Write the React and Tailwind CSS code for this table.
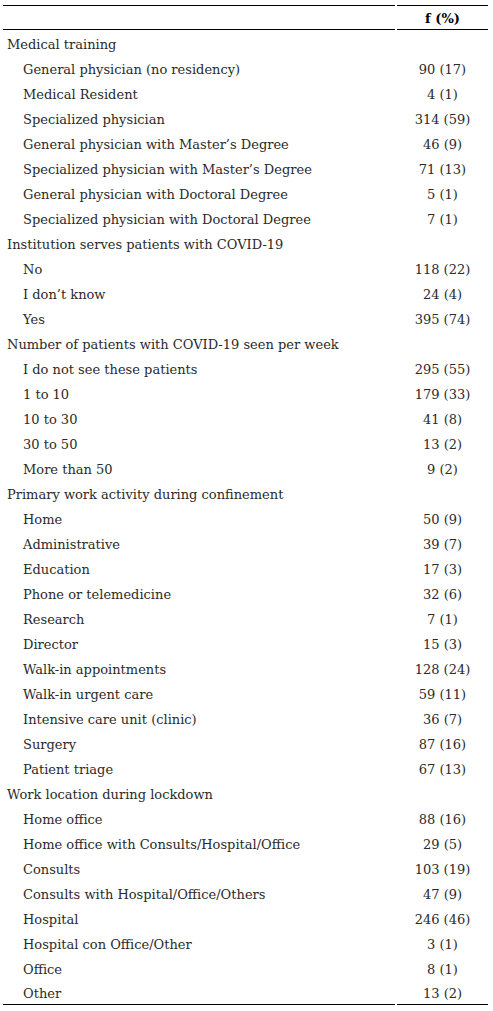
const sections = [
  {
    title: "Medical training",
    rows: [
      ["General physician (no residency)", "90 (17)"],
      ["Medical Resident", "4 (1)"],
      ["Specialized physician", "314 (59)"],
      ["General physician with Master’s Degree", "46 (9)"],
      ["Specialized physician with Master’s Degree", "71 (13)"],
      ["General physician with Doctoral Degree", "5 (1)"],
      ["Specialized physician with Doctoral Degree", "7 (1)"],
    ],
  },
  {
    title: "Institution serves patients with COVID-19",
    rows: [
      ["No", "118 (22)"],
      ["I don’t know", "24 (4)"],
      ["Yes", "395 (74)"],
    ],
  },
  {
    title: "Number of patients with COVID-19 seen per week",
    rows: [
      ["I do not see these patients", "295 (55)"],
      ["1 to 10", "179 (33)"],
      ["10 to 30", "41 (8)"],
      ["30 to 50", "13 (2)"],
      ["More than 50", "9 (2)"],
    ],
  },
  {
    title: "Primary work activity during confinement",
    rows: [
      ["Home", "50 (9)"],
      ["Administrative", "39 (7)"],
      ["Education", "17 (3)"],
      ["Phone or telemedicine", "32 (6)"],
      ["Research", "7 (1)"],
      ["Director", "15 (3)"],
      ["Walk-in appointments", "128 (24)"],
      ["Walk-in urgent care", "59 (11)"],
      ["Intensive care unit (clinic)", "36 (7)"],
      ["Surgery", "87 (16)"],
      ["Patient triage", "67 (13)"],
    ],
  },
  {
    title: "Work location during lockdown",
    rows: [
      ["Home office", "88 (16)"],
      ["Home office with Consults/Hospital/Office", "29 (5)"],
      ["Consults", "103 (19)"],
      ["Consults with Hospital/Office/Others", "47 (9)"],
      ["Hospital", "246 (46)"],
      ["Hospital con Office/Other", "3 (1)"],
      ["Office", "8 (1)"],
      ["Other", "13 (2)"],
    ],
  },
];

function Row({ label, value, indent, last }) {
  const border = last ? "border-b border-black" : "";
  return (
    <div className="flex h-[25px] gap-[2px]">
      <div className={`flex w-[392px] items-center pt-[4px] ${indent ? "pl-[20px]" : "pl-[4px]"} ${border}`}>
        {label}
      </div>
      <div className={`flex w-[91px] items-center justify-center pt-[4px] ${border}`}>{value}</div>
    </div>
  );
}

export default function App() {
  const flat = [];
  sections.forEach((s) => {
    flat.push({ label: s.title, value: "", indent: false });
    s.rows.forEach(([l, v]) => flat.push({ label: l, value: v, indent: true }));
  });

  return (
    <div
      className="min-h-[1011px] bg-white pl-[3px] pt-[5px] text-[13px] text-[#2a2a2a]"
      style={{ fontFamily: '"DejaVu Serif", serif' }}
    >
      <div className="flex h-[25px] gap-[2px]">
        <div className="w-[392px] border-y border-black" />
        <div className="flex w-[91px] items-center justify-center border-y border-black pt-[3px] font-bold text-black">
          f (%)
        </div>
      </div>
      {flat.map((r, i) => (
        <Row key={i} {...r} last={i === flat.length - 1} />
      ))}
    </div>
  );
}
